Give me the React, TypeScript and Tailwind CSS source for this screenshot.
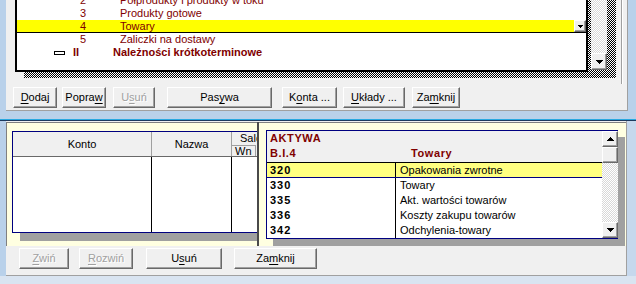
import React from 'react';

const btn =
  "flex items-center justify-center h-[21px] bg-[#f0f0f0] border border-t-white border-l-white border-r-[#696969] border-b-[#696969] shadow-[inset_-1px_-1px_0_#a0a0a0] text-[11px] leading-none whitespace-nowrap";
const sbtn =
  "flex items-center justify-center bg-[#f0f0f0] border border-t-white border-l-white border-r-[#696969] border-b-[#696969] shadow-[inset_-1px_-1px_0_#a0a0a0]";
const ditherDark = "bg-[image:repeating-conic-gradient(#000_0_25%,#fff_0_50%)] bg-[length:2px_2px]";
const ditherLight = "bg-[image:repeating-conic-gradient(#fff_0_25%,#d8d8d8_0_50%)] bg-[length:2px_2px]";

const Mn = ({ t, k }: { t: string; k: number }) => (
  <>
    {t.slice(0, k)}
    <span className="underline decoration-1 underline-offset-[2px]">{t[k]}</span>
    {t.slice(k + 1)}
  </>
);

const Down = () => (
  <svg width="7" height="4" viewBox="0 0 7 4" shapeRendering="crispEdges">
    <polygon points="0,0 7,0 3.5,4" fill="#000" />
  </svg>
);
const Up = () => (
  <svg width="7" height="4" viewBox="0 0 7 4" shapeRendering="crispEdges">
    <polygon points="3.5,0 7,4 0,4" fill="#000" />
  </svg>
);

const topRows = [
  { n: '2', t: 'Półprodukty i produkty w toku' },
  { n: '3', t: 'Produkty gotowe' },
  { n: '4', t: 'Towary', sel: true },
  { n: '5', t: 'Zaliczki na dostawy' },
];

const accounts = [
  { c: '320', t: 'Opakowania zwrotne', sel: true },
  { c: '330', t: 'Towary' },
  { c: '335', t: 'Akt. wartości towarów' },
  { c: '336', t: 'Koszty zakupu towarów' },
  { c: '342', t: 'Odchylenia-towary' },
];

function TopList() {
  return (
    <div className="h-[72px] bg-white border-l-2 border-r-2 border-b-2 border-black overflow-hidden">
      <div className="-mt-[6px] text-[#800000]">
        {topRows.map((r) =>
          r.sel ? (
            <div key={r.n} className="flex h-[13px] leading-[12px] bg-[#ffff00] border-b border-black">
              <div className="w-[69px] text-right">{r.n}</div>
              <div className="ml-[34px] whitespace-nowrap">{r.t}</div>
              <div className={`${sbtn} ml-auto w-[12px] h-[12px]`}>
                <svg width="5" height="3" viewBox="0 0 5 3" shapeRendering="crispEdges">
                  <polygon points="0,0 5,0 2.5,3" fill="#000" />
                </svg>
              </div>
            </div>
          ) : (
            <div key={r.n} className="flex h-[13px] leading-[13px]">
              <div className="w-[69px] text-right">{r.n}</div>
              <div className="ml-[34px] whitespace-nowrap">{r.t}</div>
            </div>
          )
        )}
        <div className="flex h-[13px] leading-[13px] items-center font-bold">
          <div className="w-[37px]" />
          <div className="w-[11px] h-[4px] border border-black bg-white" />
          <div className="ml-[8px] w-[40px]">II</div>
          <div className="whitespace-nowrap">Należności krótkoterminowe</div>
        </div>
      </div>
    </div>
  );
}

function LeftGrid() {
  return (
    <div className="w-[270px] h-[102px] border-l border-t border-b border-[#000080] bg-white shadow-[8px_8px_0_#a0a0a0] flex flex-col">
      <div className="h-[25px] flex bg-[#f0f0f0] border-b border-[#696969]">
        <div className="w-[139px] border-r border-[#a0a0a0] flex items-center justify-center">Konto</div>
        <div className="w-[80px] border-r border-[#a0a0a0] flex items-center justify-center">Nazwa</div>
        <div className="w-[25px] flex flex-col overflow-hidden">
          <div className="h-[13px] leading-[13px] pl-[8px] whitespace-nowrap">Saldo</div>
          <div className="h-[11px] w-[24px] border-t border-r border-[#a0a0a0] leading-[10px] pl-[3px]">Wn</div>
        </div>
      </div>
      <div className="flex-1 flex">
        <div className="w-[139px] border-r border-black" />
        <div className="w-[80px] border-r border-black" />
        <div className="flex-1" />
      </div>
    </div>
  );
}

function AccountList() {
  return (
    <div className="w-[352px] h-[109px] flex border-l border-t border-b border-[#000080] shadow-[7px_7px_0_#a0a0a0]">
      <div className="w-[335px] flex flex-col bg-white">
        <div className="h-[32px] bg-[#f0f0f0] border-b border-black font-bold text-[#800000] tracking-[0.6px]">
          <div className="h-[15px] leading-[15px] pl-[3px]">AKTYWA</div>
          <div className="h-[16px] leading-[15px] flex">
            <div className="w-[129px] pl-[3px]">B.I.4</div>
            <div className="pl-[15px]">Towary</div>
          </div>
        </div>
        {accounts.map((a) => (
          <div
            key={a.c}
            className={`h-[15px] flex leading-[15px] ${a.sel ? 'bg-[#ffff80] border-b border-[#000080] leading-[14px]' : ''}`}
          >
            <div className="w-[129px] border-r border-black pl-[3px] font-bold tracking-[1px]">{a.c}</div>
            <div className="pl-[4px] whitespace-nowrap">{a.t}</div>
          </div>
        ))}
      </div>
      <div className={`w-[16px] flex flex-col ${ditherLight}`}>
        <div className={`${sbtn} h-[16px]`}>
          <Up />
        </div>
        <div className={`${sbtn} h-[16px]`} />
        <div className="flex-1" />
        <div className={`${sbtn} h-[16px]`}>
          <Down />
        </div>
      </div>
    </div>
  );
}

export default function App() {
  return (
    <div className="w-[636px] h-[284px] overflow-hidden flex flex-col font-['Liberation_Sans',Arial,sans-serif] text-[11px] text-black select-none">
      {/* upper window */}
      <div className="h-[119px] shrink-0 flex bg-[#b9d1ea]">
        <div className="w-[6px]" />
        <div className="w-[622px] h-[111px] bg-[#f0f0f0] border-r border-b border-[#a0a0a0] flex flex-col">
          <div className="h-[84px] flex pl-[9px]">
            <div className="w-[573px] flex flex-col">
              <TopList />
              <div className={`ml-[9px] h-[6px] ${ditherDark}`} />
            </div>
            <div className={`w-[28px] h-[78px] pl-[3px] ${ditherDark}`}>
              <div className={`w-[16px] h-[70px] flex flex-col justify-end ${ditherLight}`}>
                <div className={`${sbtn} h-[17px]`}>
                  <Down />
                </div>
              </div>
            </div>
            <div className="ml-[5px] w-px h-[84px] bg-[#a0a0a0]" />
            <div className="w-px h-[84px] bg-white" />
          </div>
          <div className="mt-[3px] flex pl-[7px]">
            <button className={`${btn} w-[44px]`}><Mn t="Dodaj" k={0} /></button>
            <button className={`${btn} w-[44px] ml-[5px]`}><Mn t="Popraw" k={5} /></button>
            <button className={`${btn} w-[42px] ml-[7px] text-[#a0a0a0] [text-shadow:1px_1px_0_#fff]`}><Mn t="Usuń" k={1} /></button>
            <button className={`${btn} w-[105px] ml-[12px]`}><Mn t="Pasywa" k={3} /></button>
            <button className={`${btn} w-[55px] ml-[10px]`}><Mn t="Konta ..." k={1} /></button>
            <button className={`${btn} w-[62px] ml-[6px]`}><Mn t="Układy ..." k={0} /></button>
            <button className={`${btn} w-[48px] ml-[7px]`}><Mn t="Zamknij" k={2} /></button>
          </div>
        </div>
        <div className="flex-1" />
      </div>
      <div className="h-px shrink-0 bg-[#29a8e0]" />
      <div className="h-px shrink-0 bg-[#1c3a5e]" />

      {/* lower window */}
      <div className="flex-1 flex flex-col bg-[#d9e4f1]">
        <div className="h-[155px] flex">
          <div className="w-[6px] bg-[#b9d1ea]" />
          <div className="w-[621px] bg-[#f0f0f0] border-r border-b border-[#a0a0a0] flex flex-col pt-px">
            <div className="h-[124px] flex">
              <div className="w-[251px] bg-[#ffffe1] border-l border-t border-[#808080] pl-[5px] pt-[8px] overflow-hidden">
                <LeftGrid />
              </div>
              <div className="w-[2px] bg-[#4a4a4a]" />
              <div className="w-[367px] bg-[#ffffe1] border-t border-[#808080] pl-[7px] pt-[7px]">
                <AccountList />
              </div>
            </div>
            <div className="mt-[2px] flex pl-[13px]">
              <button className={`${btn} w-[50px] text-[#a0a0a0] [text-shadow:1px_1px_0_#fff]`}><Mn t="Zwiń" k={0} /></button>
              <button className={`${btn} w-[54px] ml-[10px] text-[#a0a0a0] [text-shadow:1px_1px_0_#fff]`}><Mn t="Rozwiń" k={0} /></button>
              <button className={`${btn} w-[76px] ml-[13px]`}><Mn t="Usuń" k={1} /></button>
              <button className={`${btn} w-[83px] ml-[12px]`}><Mn t="Zamknij" k={2} /></button>
            </div>
          </div>
          <div className="flex-1 bg-[#c6d8ed]" />
        </div>
        <div className="flex-1" />
      </div>
    </div>
  );
}
